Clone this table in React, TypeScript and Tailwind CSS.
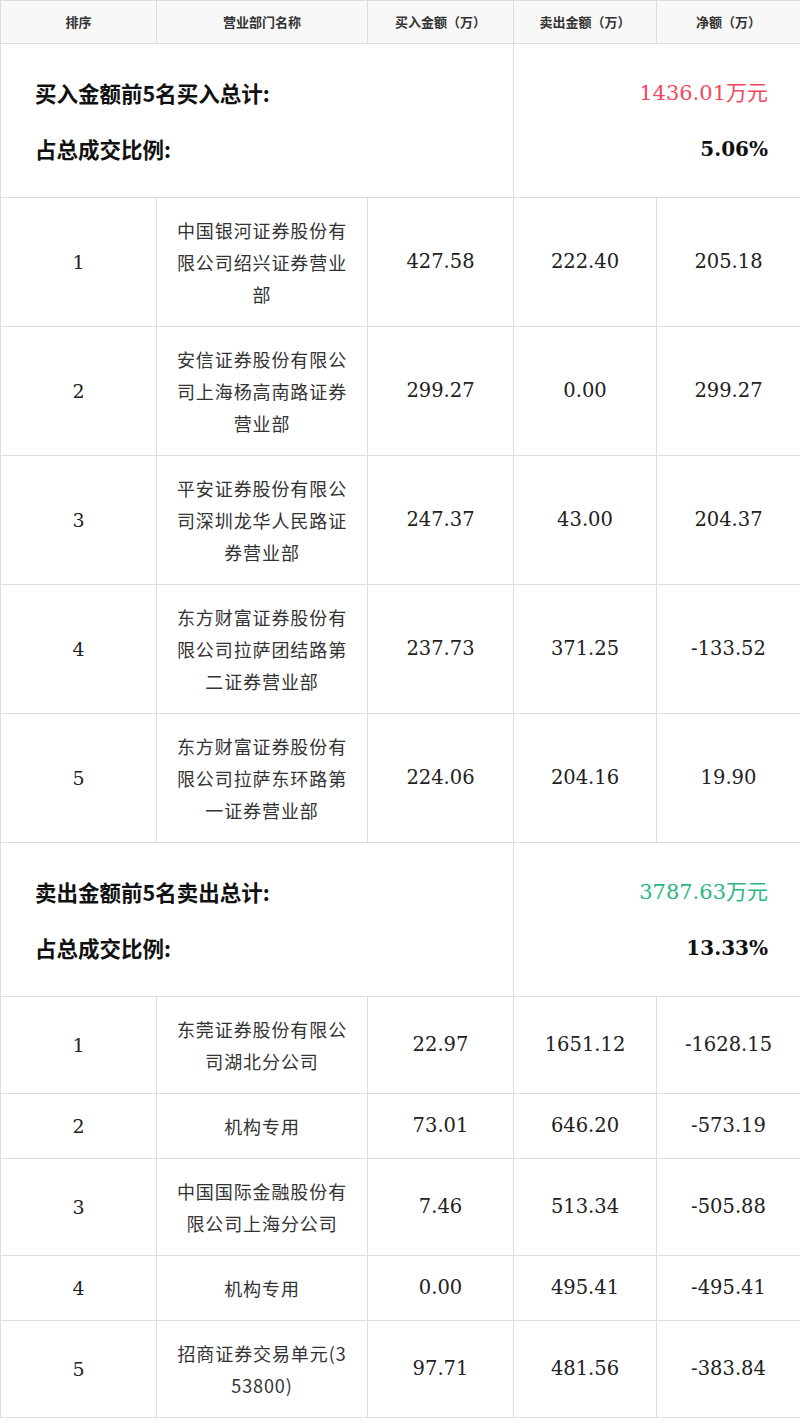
import React from "react";

type Row = { rank: number; name: string; buy: string; sell: string; net: string };

const BUY_ROWS: Row[] = [
  { rank: 1, name: "中国银河证券股份有限公司绍兴证券营业部", buy: "427.58", sell: "222.40", net: "205.18" },
  { rank: 2, name: "安信证券股份有限公司上海杨高南路证券营业部", buy: "299.27", sell: "0.00", net: "299.27" },
  { rank: 3, name: "平安证券股份有限公司深圳龙华人民路证券营业部", buy: "247.37", sell: "43.00", net: "204.37" },
  { rank: 4, name: "东方财富证券股份有限公司拉萨团结路第二证券营业部", buy: "237.73", sell: "371.25", net: "-133.52" },
  { rank: 5, name: "东方财富证券股份有限公司拉萨东环路第一证券营业部", buy: "224.06", sell: "204.16", net: "19.90" },
];

const SELL_ROWS: Row[] = [
  { rank: 1, name: "东莞证券股份有限公司湖北分公司", buy: "22.97", sell: "1651.12", net: "-1628.15" },
  { rank: 2, name: "机构专用", buy: "73.01", sell: "646.20", net: "-573.19" },
  { rank: 3, name: "中国国际金融股份有限公司上海分公司", buy: "7.46", sell: "513.34", net: "-505.88" },
  { rank: 4, name: "机构专用", buy: "0.00", sell: "495.41", net: "-495.41" },
  { rank: 5, name: "招商证券交易单元(353800)", buy: "97.71", sell: "481.56", net: "-383.84" },
];

const serif = "font-['DejaVu_Serif','Noto_Sans_CJK_SC',serif]";
const td = "border border-[#dddddd] text-center align-middle py-[16px] leading-[32px] text-[#222222]";

function Summary({ title, amount, ratio, color }: { title: string; amount: string; ratio: string; color: string }) {
  return (
    <tr>
      <td colSpan={3} className="border border-[#dddddd] pl-[34px] pt-[35px] pb-[34px] align-top">
        <div className="flex flex-col gap-[28px] text-[21.5px] leading-[28px] font-bold text-[#111111] font-['Noto_Sans_CJK_SC',sans-serif]">
          <div>{title}</div>
          <div>占总成交比例:</div>
        </div>
      </td>
      <td colSpan={2} className="border border-[#dddddd] pr-[32px] pt-[35px] pb-[34px] align-top">
        <div className={`flex flex-col items-end gap-[28px] leading-[28px] ${serif}`}>
          <div className={`text-[21px] ${color}`}>{amount}</div>
          <div className="text-[20px] font-bold text-[#111111]">{ratio}</div>
        </div>
      </td>
    </tr>
  );
}

function DataRow({ r }: { r: Row }) {
  return (
    <tr>
      <td className={`${td} text-[19px] ${serif}`}>{r.rank}</td>
      <td className={`${td} text-[18px] text-[#333333] px-[16px] font-['Noto_Sans_CJK_SC',sans-serif] tracking-[0.9px] break-all`}>
        {r.name}
      </td>
      <td className={`${td} text-[19.5px] ${serif}`}>{r.buy}</td>
      <td className={`${td} text-[19.5px] ${serif}`}>{r.sell}</td>
      <td className={`${td} text-[19.5px] ${serif}`}>{r.net}</td>
    </tr>
  );
}

export default function App() {
  return (
    <div className="w-[800px] bg-white">
      <table className="w-[800px] border-collapse table-fixed">
        <colgroup>
          <col className="w-[156px]" />
          <col className="w-[211px]" />
          <col className="w-[146px]" />
          <col className="w-[143px]" />
          <col className="w-[144px]" />
        </colgroup>
        <thead>
          <tr className="bg-[#f8f8f8] h-[43px]">
            {["排序", "营业部门名称", "买入金额（万）", "卖出金额（万）", "净额（万）"].map((h) => (
              <th
                key={h}
                className="border border-[#dddddd] text-center text-[13px] font-bold text-[#333333] font-['Noto_Sans_CJK_SC',sans-serif]"
              >
                {h}
              </th>
            ))}
          </tr>
        </thead>
        <tbody>
          <Summary title="买入金额前5名买入总计:" amount="1436.01万元" ratio="5.06%" color="text-[#f5475b]" />
          {BUY_ROWS.map((r) => (
            <DataRow key={`b${r.rank}`} r={r} />
          ))}
          <Summary title="卖出金额前5名卖出总计:" amount="3787.63万元" ratio="13.33%" color="text-[#27b77f]" />
          {SELL_ROWS.map((r) => (
            <DataRow key={`s${r.rank}`} r={r} />
          ))}
        </tbody>
      </table>
    </div>
  );
}
